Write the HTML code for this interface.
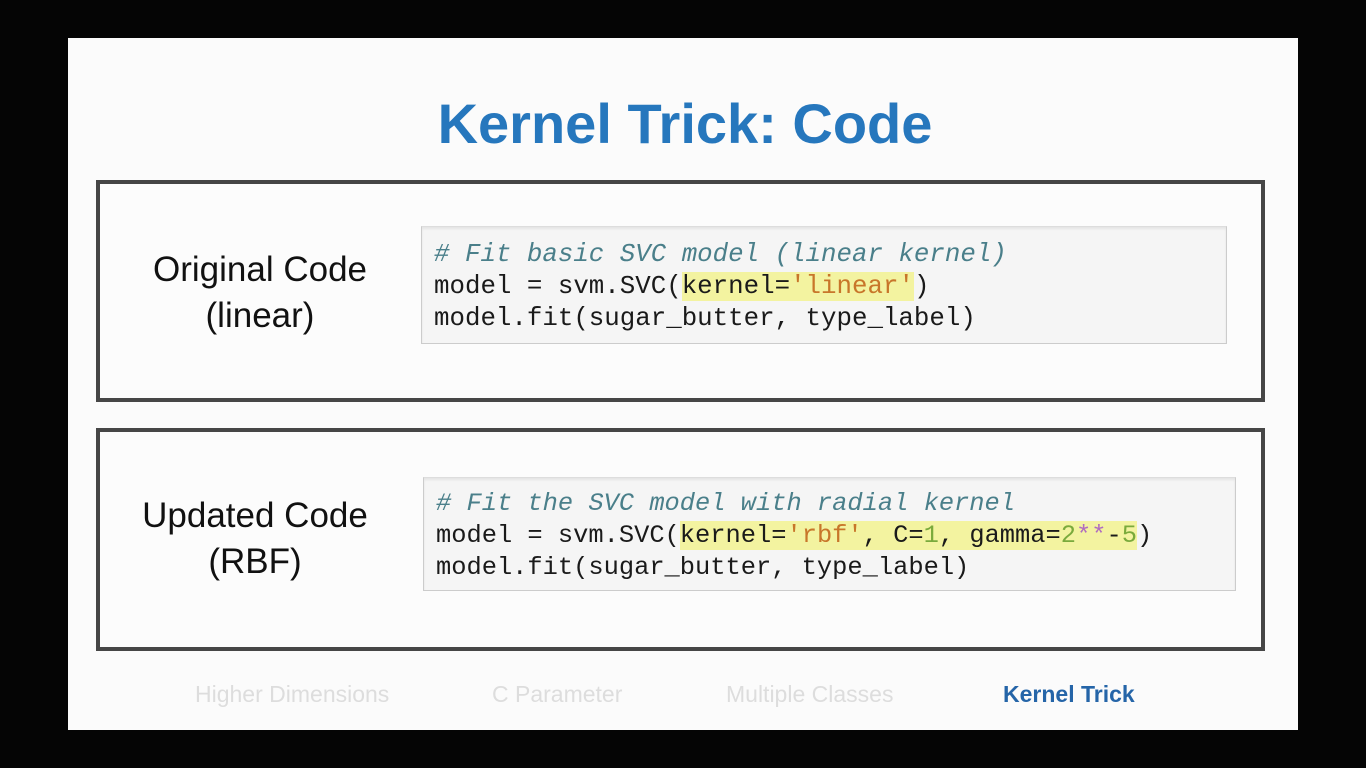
<!DOCTYPE html>
<html><head><style>
body{margin:0;width:1366px;height:768px;background:#050505;position:relative;overflow:hidden;font-family:"Liberation Sans",sans-serif}
.slide{position:absolute;left:68px;top:38px;width:1230px;height:692px;background:#fbfbfb}
.t{position:absolute;left:0;width:1366px;top:91px;text-align:center;font-size:56px;font-weight:bold;color:#2677bd;padding-left:2px}
.box{position:absolute;left:96px;width:1161px;border:4px solid #464646;background:#fcfcfc}
.lbl{position:absolute;text-align:center;font-size:35px;color:#111;line-height:46px}
.code{position:absolute;background:#f5f5f5;border:1px solid #ccc;border-top-color:#ddd;box-shadow:inset 0 2px 2px #e4e4e4;font-family:"Liberation Mono",monospace;color:#1a1a1a;white-space:pre}
.code div{height:32px;line-height:32px}
.c{color:#4a7f8a;font-style:italic}
.h{background:#f3f3a0}
.s{color:#c8762a}
.n{color:#7aaa3c}
.o{color:#b06cc0}
.nav{position:absolute;top:681px;font-size:23px;color:#ddd}
</style></head><body>
<div class="slide"></div>
<div class="t">Kernel Trick: Code</div>
<div class="box" style="top:180px;height:214px"></div>
<div class="box" style="top:428px;height:215px"></div>
<div class="lbl" style="left:130px;width:260px;top:247px">Original Code<br>(linear)</div>
<div class="lbl" style="left:125px;width:260px;top:493px">Updated Code<br>(RBF)</div>
<div class="code" style="left:421px;top:226px;width:806px;height:118px;font-size:25.8px;padding:0 0 0 12px;box-sizing:border-box"><div style="margin-top:12px"><span class="c"># Fit basic SVC model (linear kernel)</span></div><div>model = svm.SVC(<span class="h">kernel=<span class="s">'linear'</span></span>)</div><div>model.fit(sugar_butter, type_label)</div></div>
<div class="code" style="left:423px;top:477px;width:813px;height:114px;font-size:25.4px;padding:0 0 0 12px;box-sizing:border-box"><div style="margin-top:10px"><span class="c"># Fit the SVC model with radial kernel</span></div><div>model = svm.SVC(<span class="h">kernel=<span class="s">'rbf'</span>, C=<span class="n">1</span>, gamma=<span class="n">2</span><span class="o">**</span>-<span class="n">5</span></span>)</div><div>model.fit(sugar_butter, type_label)</div></div>
<div class="nav" style="left:195px">Higher Dimensions</div>
<div class="nav" style="left:492px">C Parameter</div>
<div class="nav" style="left:726px">Multiple Classes</div>
<div class="nav" style="left:1003px;color:#2565a8;font-weight:bold">Kernel Trick</div>
</body></html>
